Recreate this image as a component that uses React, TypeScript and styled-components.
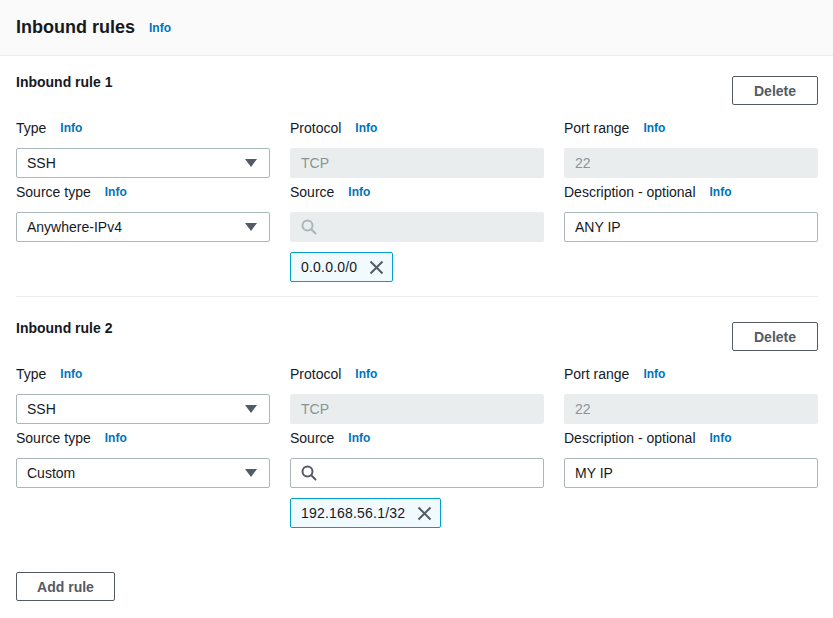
import React from "react";
import styled, { createGlobalStyle } from "styled-components";

const GlobalStyle = createGlobalStyle`
  html, body {
    margin: 0;
    padding: 0;
    background: #ffffff;
  }
  body {
    font-family: "Liberation Sans", Arial, sans-serif;
    color: #16191f;
    -webkit-font-smoothing: antialiased;
  }
`;

const Panel = styled.div`
  width: 833px;
  height: 618px;
  background: #ffffff;
  overflow: hidden;
`;

const PanelHeader = styled.header`
  height: 55px;
  display: flex;
  align-items: center;
  gap: 14px;
  padding: 0 16px;
  background: #fafafa;
  border-bottom: 1px solid #eaeded;
`;

const PanelTitle = styled.h2`
  margin: 0;
  font-size: 18px;
  font-weight: 700;
  line-height: 22px;
  color: #16191f;
  position: relative;
  top: -1px;
`;

const InfoLink = styled.a`
  font-size: 12px;
  font-weight: 700;
  color: #0073bb;
  text-decoration: none;
  cursor: pointer;
`;

const Body = styled.div`
  padding: 16px 15px 0 16px;
`;

const Rule = styled.section``;

const RuleHead = styled.div`
  display: flex;
  justify-content: space-between;
  align-items: flex-start;
`;

const RuleTitle = styled.h3`
  margin: 0;
  font-size: 14px;
  font-weight: 700;
  line-height: 20px;
`;

const OutlineButton = styled.button<{ $top?: number }>`
  margin-top: ${(p) => p.$top ?? 0}px;
  height: 29px;
  padding: 0 20px;
  background: #ffffff;
  border: 1px solid #545b64;
  border-radius: 2px;
  font-family: inherit;
  font-size: 14px;
  font-weight: 700;
  color: #545b64;
  cursor: pointer;
`;

const DeleteButton = styled(OutlineButton)`
  width: 86px;
`;

const AddButton = styled(OutlineButton)`
  width: 99px;
  margin-top: 44px;
`;

const FieldGrid = styled.div`
  margin-top: 13px;
  display: grid;
  grid-template-columns: repeat(3, 1fr);
  column-gap: 20px;
  row-gap: 4px;
`;

const Field = styled.div`
  display: flex;
  flex-direction: column;
  min-width: 0;
`;

const Label = styled.label`
  display: flex;
  align-items: center;
  gap: 14px;
  height: 20px;
  margin-bottom: 10px;
  font-size: 14px;
  color: #16191f;
  white-space: nowrap;
`;

const Box = styled.div<{ $disabled?: boolean }>`
  box-sizing: border-box;
  height: 30px;
  display: flex;
  align-items: center;
  gap: 8px;
  padding: 0 10px;
  border: 1px solid ${(p) => (p.$disabled ? "#eaeded" : "#aab7b8")};
  border-radius: 2px;
  background: ${(p) => (p.$disabled ? "#eaeded" : "#ffffff")};
  color: ${(p) => (p.$disabled ? "#879596" : "#16191f")};
  font-size: 14px;
`;

const BoxText = styled.span`
  flex: 1;
`;

const Caret = styled.span`
  width: 0;
  height: 0;
  margin-right: 2px;
  border-left: 6px solid transparent;
  border-right: 6px solid transparent;
  border-top: 8px solid #545b64;
`;

const Token = styled.div`
  align-self: flex-start;
  box-sizing: border-box;
  height: 30px;
  margin-top: 10px;
  display: flex;
  align-items: center;
  gap: 12px;
  padding: 0 8px 0 10px;
  border: 1px solid #00a1c9;
  border-radius: 2px;
  background: #f1faff;
  font-size: 14px;
  letter-spacing: 0.2px;
  color: #16191f;
`;

const Divider = styled.hr`
  margin: 14px 0 21px;
  border: none;
  border-top: 1px solid #eaeded;
`;

const SearchIcon = ({ color }: { color: string }) => (
  <svg width="16" height="16" viewBox="0 0 16 16" fill="none">
    <circle cx="6.5" cy="6.5" r="5" stroke={color} strokeWidth="2" />
    <path d="M10.2 10.2L14.5 14.5" stroke={color} strokeWidth="2" strokeLinecap="round" />
  </svg>
);

const CloseIcon = () => (
  <svg width="15" height="15" viewBox="0 0 15 15" fill="none">
    <path d="M1.5 1.5L13.5 13.5M13.5 1.5L1.5 13.5" stroke="#545b64" strokeWidth="2" />
  </svg>
);

type RuleData = {
  type: string;
  port: string;
  sourceType: string;
  sourceLocked: boolean;
  cidr: string;
  description: string;
};

const rules: RuleData[] = [
  {
    type: "SSH",
    port: "22",
    sourceType: "Anywhere-IPv4",
    sourceLocked: true,
    cidr: "0.0.0.0/0",
    description: "ANY IP",
  },
  {
    type: "SSH",
    port: "22",
    sourceType: "Custom",
    sourceLocked: false,
    cidr: "192.168.56.1/32",
    description: "MY IP",
  },
];

const FieldLabel = ({ children }: { children: React.ReactNode }) => (
  <Label>
    {children}
    <InfoLink>Info</InfoLink>
  </Label>
);

const RuleEditor = ({ rule, index }: { rule: RuleData; index: number }) => (
  <Rule>
    <RuleHead>
      <RuleTitle>Inbound rule {index + 1}</RuleTitle>
      <DeleteButton $top={4}>Delete</DeleteButton>
    </RuleHead>
    <FieldGrid>
      <Field>
        <FieldLabel>Type</FieldLabel>
        <Box>
          <BoxText>{rule.type}</BoxText>
          <Caret />
        </Box>
      </Field>
      <Field>
        <FieldLabel>Protocol</FieldLabel>
        <Box $disabled>TCP</Box>
      </Field>
      <Field>
        <FieldLabel>Port range</FieldLabel>
        <Box $disabled>{rule.port}</Box>
      </Field>
      <Field>
        <FieldLabel>Source type</FieldLabel>
        <Box>
          <BoxText>{rule.sourceType}</BoxText>
          <Caret />
        </Box>
      </Field>
      <Field>
        <FieldLabel>Source</FieldLabel>
        <Box $disabled={rule.sourceLocked}>
          <SearchIcon color={rule.sourceLocked ? "#aab7b8" : "#545b64"} />
        </Box>
        <Token>
          {rule.cidr}
          <CloseIcon />
        </Token>
      </Field>
      <Field>
        <FieldLabel>Description - optional</FieldLabel>
        <Box>{rule.description}</Box>
      </Field>
    </FieldGrid>
  </Rule>
);

export default function App() {
  return (
    <>
      <GlobalStyle />
      <Panel>
        <PanelHeader>
          <PanelTitle>Inbound rules</PanelTitle>
          <InfoLink>Info</InfoLink>
        </PanelHeader>
        <Body>
          {rules.map((rule, i) => (
            <React.Fragment key={i}>
              {i > 0 && <Divider />}
              <RuleEditor rule={rule} index={i} />
            </React.Fragment>
          ))}
          <AddButton>Add rule</AddButton>
        </Body>
      </Panel>
    </>
  );
}
